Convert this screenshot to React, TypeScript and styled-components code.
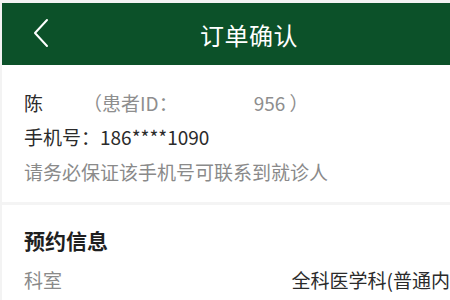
import styled, { createGlobalStyle } from "styled-components";

const GlobalStyle = createGlobalStyle`
  html, body {
    margin: 0;
    padding: 0;
    background-color: #f3f3f3;
    overflow: hidden;
  }
  body {
    font-family: "Noto Sans CJK SC", "Noto Sans", sans-serif;
  }
`;

const Page = styled.div`
  width: 448px;
  padding: 3px 0 0 2px;
`;

const Header = styled.div`
  height: 62px;
  background-color: #0c5129;
  display: flex;
  align-items: center;
  justify-content: center;
  padding-left: 46px;
  position: relative;
`;

const BackButton = styled.div`
  position: absolute;
  left: 26px;
  top: 12px;
  width: 26px;
  height: 36px;
  display: flex;
  align-items: center;
  justify-content: center;
`;

const Title = styled.h1`
  margin: 0;
  color: #ffffff;
  font-size: 24px;
  font-weight: 400;
  letter-spacing: 0.5px;
  line-height: 1;
  padding-top: 2px;
`;

const Card = styled.div<{ $top: number; $bottom: number }>`
  background-color: #ffffff;
  padding: ${(p) => p.$top}px 0 ${(p) => p.$bottom}px 22px;
`;

const Divider = styled.div`
  height: 3px;
  background-color: #f4f4f4;
`;

const Line = styled.div<{ $tone?: "dark" | "muted" }>`
  font-size: 19px;
  line-height: 34px;
  white-space: nowrap;
  color: ${(p) => (p.$tone === "muted" ? "#8a8a8a" : "#2b2b2b")};
`;

const Muted = styled.span`
  color: #8e8e8e;
`;

const Masked = styled.span<{ $w: number }>`
  display: inline-block;
  width: ${(p) => p.$w}px;
`;

const SectionTitle = styled.h2`
  margin: 0;
  font-size: 21px;
  line-height: 30px;
  font-weight: 700;
  color: #1f1f1f;
`;

const InfoRow = styled.div`
  display: flex;
  justify-content: space-between;
  margin-top: 10px;
  font-size: 19px;
  line-height: 30px;
  white-space: nowrap;
`;

const Label = styled.span`
  color: #8a8a8a;
`;

const Value = styled.span`
  color: #2b2b2b;
`;

const Chevron = () => (
  <svg width="18" height="30" viewBox="0 0 18 30" fill="none">
    <path d="M15 2 L3 15 L15 28" stroke="#ffffff" strokeWidth="2" strokeLinecap="round" strokeLinejoin="round" />
  </svg>
);

export default function App() {
  return (
    <>
      <GlobalStyle />
      <Page>
        <Header>
          <BackButton>
            <Chevron />
          </BackButton>
          <Title>订单确认</Title>
        </Header>
        <Card $top={21} $bottom={13}>
          <Line>
            陈<Masked $w={40} />
            <Muted>
              （患者ID：<Masked $w={76} />956 ）
            </Muted>
          </Line>
          <Line>手机号：186****1090</Line>
          <Line $tone="muted" style={{ marginTop: 1 }}>
            请务必保证该手机号可联系到就诊人
          </Line>
        </Card>
        <Divider />
        <Card $top={20} $bottom={10}>
          <SectionTitle>预约信息</SectionTitle>
          <InfoRow>
            <Label>科室</Label>
            <Value>全科医学科(普通内</Value>
          </InfoRow>
        </Card>
      </Page>
    </>
  );
}
